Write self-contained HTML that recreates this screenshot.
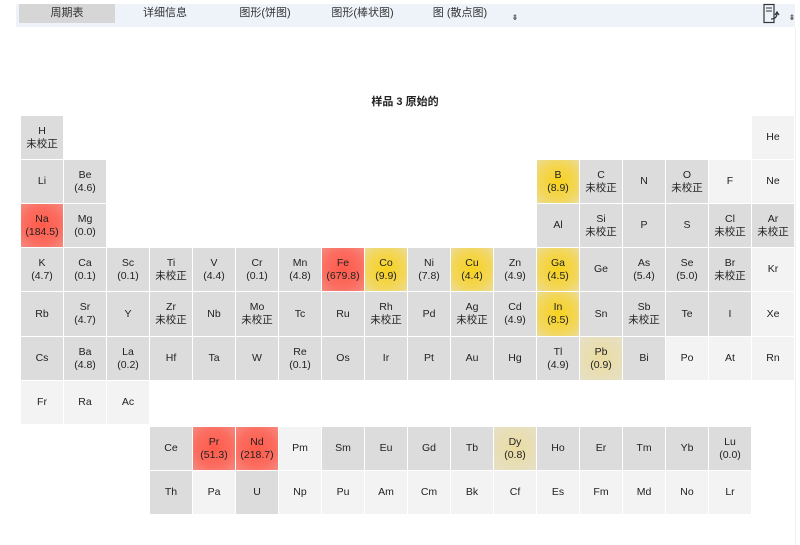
<!DOCTYPE html>
<html><head><meta charset="utf-8"><style>
body{margin:0;width:800px;height:545px;background:#fff;font-family:"Liberation Sans","Noto Sans CJK SC",sans-serif;position:relative;overflow:hidden;color:#222}
.bar{position:absolute;left:16px;top:4px;width:779px;height:23px;background:#eef3fa}
.tab{position:absolute;top:4px;height:19px;font-size:11px;line-height:19px;text-align:center;color:#333}
.sel{background:#d6d6d6}
.title{position:absolute;left:0;width:810px;top:93px;text-align:center;font-size:11px;font-weight:bold;color:#222}
.grid{position:absolute;left:21px;top:116px;display:grid;grid-template-columns:repeat(18,43px);grid-template-rows:44px 44px 44px 44px 45px 44px 46px 44px 44px}
.grid div{margin:0 1px 1px 0;display:flex;align-items:center;justify-content:center;text-align:center;font-size:10.5px;line-height:13px;color:#222}
.g{background:#dcdcdc}.l{background:#f3f3f3}
.r{background:radial-gradient(circle,#ff5a4a 0%,#fb6d60 60%,#f58a80 100%)}
.y{background:radial-gradient(circle,#f7d21c 0%,#f3d657 60%,#ebdc98 100%)}
.p{background:radial-gradient(circle,#eadca0 0%,#e6e0c6 100%)}
.vl{position:absolute;left:795px;top:27px;width:1px;height:518px;background:#f0f0f0}
</style></head><body>
<div class="bar"></div>
<div class="tab sel" style="left:19px;width:96px">周期表</div>
<div class="tab" style="left:130px;width:70px">详细信息</div>
<div class="tab" style="left:225px;width:80px">图形(饼图)</div>
<div class="tab" style="left:320px;width:85px">图形(棒状图)</div>
<div class="tab" style="left:425px;width:70px">图 (散点图)</div>
<div class="tab" style="left:510px;width:10px;font-size:8px;top:8px">⇟</div>
<svg style="position:absolute;left:762px;top:3px" width="20" height="22" viewBox="0 0 20 22"><rect x="2" y="1.5" width="10" height="18" fill="none" stroke="#333" stroke-width="1.2"/><line x1="4" y1="5" x2="10" y2="5" stroke="#333"/><line x1="4" y1="8" x2="10" y2="8" stroke="#333"/><path d="M9 16 Q15 16 15 10 M13 12 L15 9 L17 12" fill="none" stroke="#333" stroke-width="1.2"/></svg>
<div class="tab" style="left:787px;width:10px;font-size:8px;top:8px">⇟</div>
<div class="vl"></div>
<div class="title">样品 3 原始的</div>
<div class="grid">
<div class="g" style="grid-area:1/1">H<br>未校正</div>
<div class="l" style="grid-area:1/18">He</div>
<div class="g" style="grid-area:2/1">Li</div>
<div class="g" style="grid-area:2/2">Be<br>(4.6)</div>
<div class="y" style="grid-area:2/13">B<br>(8.9)</div>
<div class="g" style="grid-area:2/14">C<br>未校正</div>
<div class="g" style="grid-area:2/15">N</div>
<div class="g" style="grid-area:2/16">O<br>未校正</div>
<div class="l" style="grid-area:2/17">F</div>
<div class="l" style="grid-area:2/18">Ne</div>
<div class="r" style="grid-area:3/1">Na<br>(184.5)</div>
<div class="g" style="grid-area:3/2">Mg<br>(0.0)</div>
<div class="g" style="grid-area:3/13">Al</div>
<div class="g" style="grid-area:3/14">Si<br>未校正</div>
<div class="g" style="grid-area:3/15">P</div>
<div class="g" style="grid-area:3/16">S</div>
<div class="g" style="grid-area:3/17">Cl<br>未校正</div>
<div class="g" style="grid-area:3/18">Ar<br>未校正</div>
<div class="g" style="grid-area:4/1">K<br>(4.7)</div>
<div class="g" style="grid-area:4/2">Ca<br>(0.1)</div>
<div class="g" style="grid-area:4/3">Sc<br>(0.1)</div>
<div class="g" style="grid-area:4/4">Ti<br>未校正</div>
<div class="g" style="grid-area:4/5">V<br>(4.4)</div>
<div class="g" style="grid-area:4/6">Cr<br>(0.1)</div>
<div class="g" style="grid-area:4/7">Mn<br>(4.8)</div>
<div class="r" style="grid-area:4/8">Fe<br>(679.8)</div>
<div class="y" style="grid-area:4/9">Co<br>(9.9)</div>
<div class="g" style="grid-area:4/10">Ni<br>(7.8)</div>
<div class="y" style="grid-area:4/11">Cu<br>(4.4)</div>
<div class="g" style="grid-area:4/12">Zn<br>(4.9)</div>
<div class="y" style="grid-area:4/13">Ga<br>(4.5)</div>
<div class="g" style="grid-area:4/14">Ge</div>
<div class="g" style="grid-area:4/15">As<br>(5.4)</div>
<div class="g" style="grid-area:4/16">Se<br>(5.0)</div>
<div class="g" style="grid-area:4/17">Br<br>未校正</div>
<div class="l" style="grid-area:4/18">Kr</div>
<div class="g" style="grid-area:5/1">Rb</div>
<div class="g" style="grid-area:5/2">Sr<br>(4.7)</div>
<div class="g" style="grid-area:5/3">Y</div>
<div class="g" style="grid-area:5/4">Zr<br>未校正</div>
<div class="g" style="grid-area:5/5">Nb</div>
<div class="g" style="grid-area:5/6">Mo<br>未校正</div>
<div class="g" style="grid-area:5/7">Tc</div>
<div class="g" style="grid-area:5/8">Ru</div>
<div class="g" style="grid-area:5/9">Rh<br>未校正</div>
<div class="g" style="grid-area:5/10">Pd</div>
<div class="g" style="grid-area:5/11">Ag<br>未校正</div>
<div class="g" style="grid-area:5/12">Cd<br>(4.9)</div>
<div class="y" style="grid-area:5/13">In<br>(8.5)</div>
<div class="g" style="grid-area:5/14">Sn</div>
<div class="g" style="grid-area:5/15">Sb<br>未校正</div>
<div class="g" style="grid-area:5/16">Te</div>
<div class="g" style="grid-area:5/17">I</div>
<div class="l" style="grid-area:5/18">Xe</div>
<div class="g" style="grid-area:6/1">Cs</div>
<div class="g" style="grid-area:6/2">Ba<br>(4.8)</div>
<div class="g" style="grid-area:6/3">La<br>(0.2)</div>
<div class="g" style="grid-area:6/4">Hf</div>
<div class="g" style="grid-area:6/5">Ta</div>
<div class="g" style="grid-area:6/6">W</div>
<div class="g" style="grid-area:6/7">Re<br>(0.1)</div>
<div class="g" style="grid-area:6/8">Os</div>
<div class="g" style="grid-area:6/9">Ir</div>
<div class="g" style="grid-area:6/10">Pt</div>
<div class="g" style="grid-area:6/11">Au</div>
<div class="g" style="grid-area:6/12">Hg</div>
<div class="g" style="grid-area:6/13">Tl<br>(4.9)</div>
<div class="p" style="grid-area:6/14">Pb<br>(0.9)</div>
<div class="g" style="grid-area:6/15">Bi</div>
<div class="l" style="grid-area:6/16">Po</div>
<div class="l" style="grid-area:6/17">At</div>
<div class="l" style="grid-area:6/18">Rn</div>
<div class="l" style="grid-area:7/1;margin-bottom:3px">Fr</div>
<div class="l" style="grid-area:7/2;margin-bottom:3px">Ra</div>
<div class="l" style="grid-area:7/3;margin-bottom:3px">Ac</div>
<div class="g" style="grid-area:8/4">Ce</div>
<div class="r" style="grid-area:8/5">Pr<br>(51.3)</div>
<div class="r" style="grid-area:8/6">Nd<br>(218.7)</div>
<div class="l" style="grid-area:8/7">Pm</div>
<div class="g" style="grid-area:8/8">Sm</div>
<div class="g" style="grid-area:8/9">Eu</div>
<div class="g" style="grid-area:8/10">Gd</div>
<div class="g" style="grid-area:8/11">Tb</div>
<div class="p" style="grid-area:8/12">Dy<br>(0.8)</div>
<div class="g" style="grid-area:8/13">Ho</div>
<div class="g" style="grid-area:8/14">Er</div>
<div class="g" style="grid-area:8/15">Tm</div>
<div class="g" style="grid-area:8/16">Yb</div>
<div class="g" style="grid-area:8/17">Lu<br>(0.0)</div>
<div class="g" style="grid-area:9/4">Th</div>
<div class="l" style="grid-area:9/5">Pa</div>
<div class="g" style="grid-area:9/6">U</div>
<div class="l" style="grid-area:9/7">Np</div>
<div class="l" style="grid-area:9/8">Pu</div>
<div class="l" style="grid-area:9/9">Am</div>
<div class="l" style="grid-area:9/10">Cm</div>
<div class="l" style="grid-area:9/11">Bk</div>
<div class="l" style="grid-area:9/12">Cf</div>
<div class="l" style="grid-area:9/13">Es</div>
<div class="l" style="grid-area:9/14">Fm</div>
<div class="l" style="grid-area:9/15">Md</div>
<div class="l" style="grid-area:9/16">No</div>
<div class="l" style="grid-area:9/17">Lr</div>
</div>
</body></html>
